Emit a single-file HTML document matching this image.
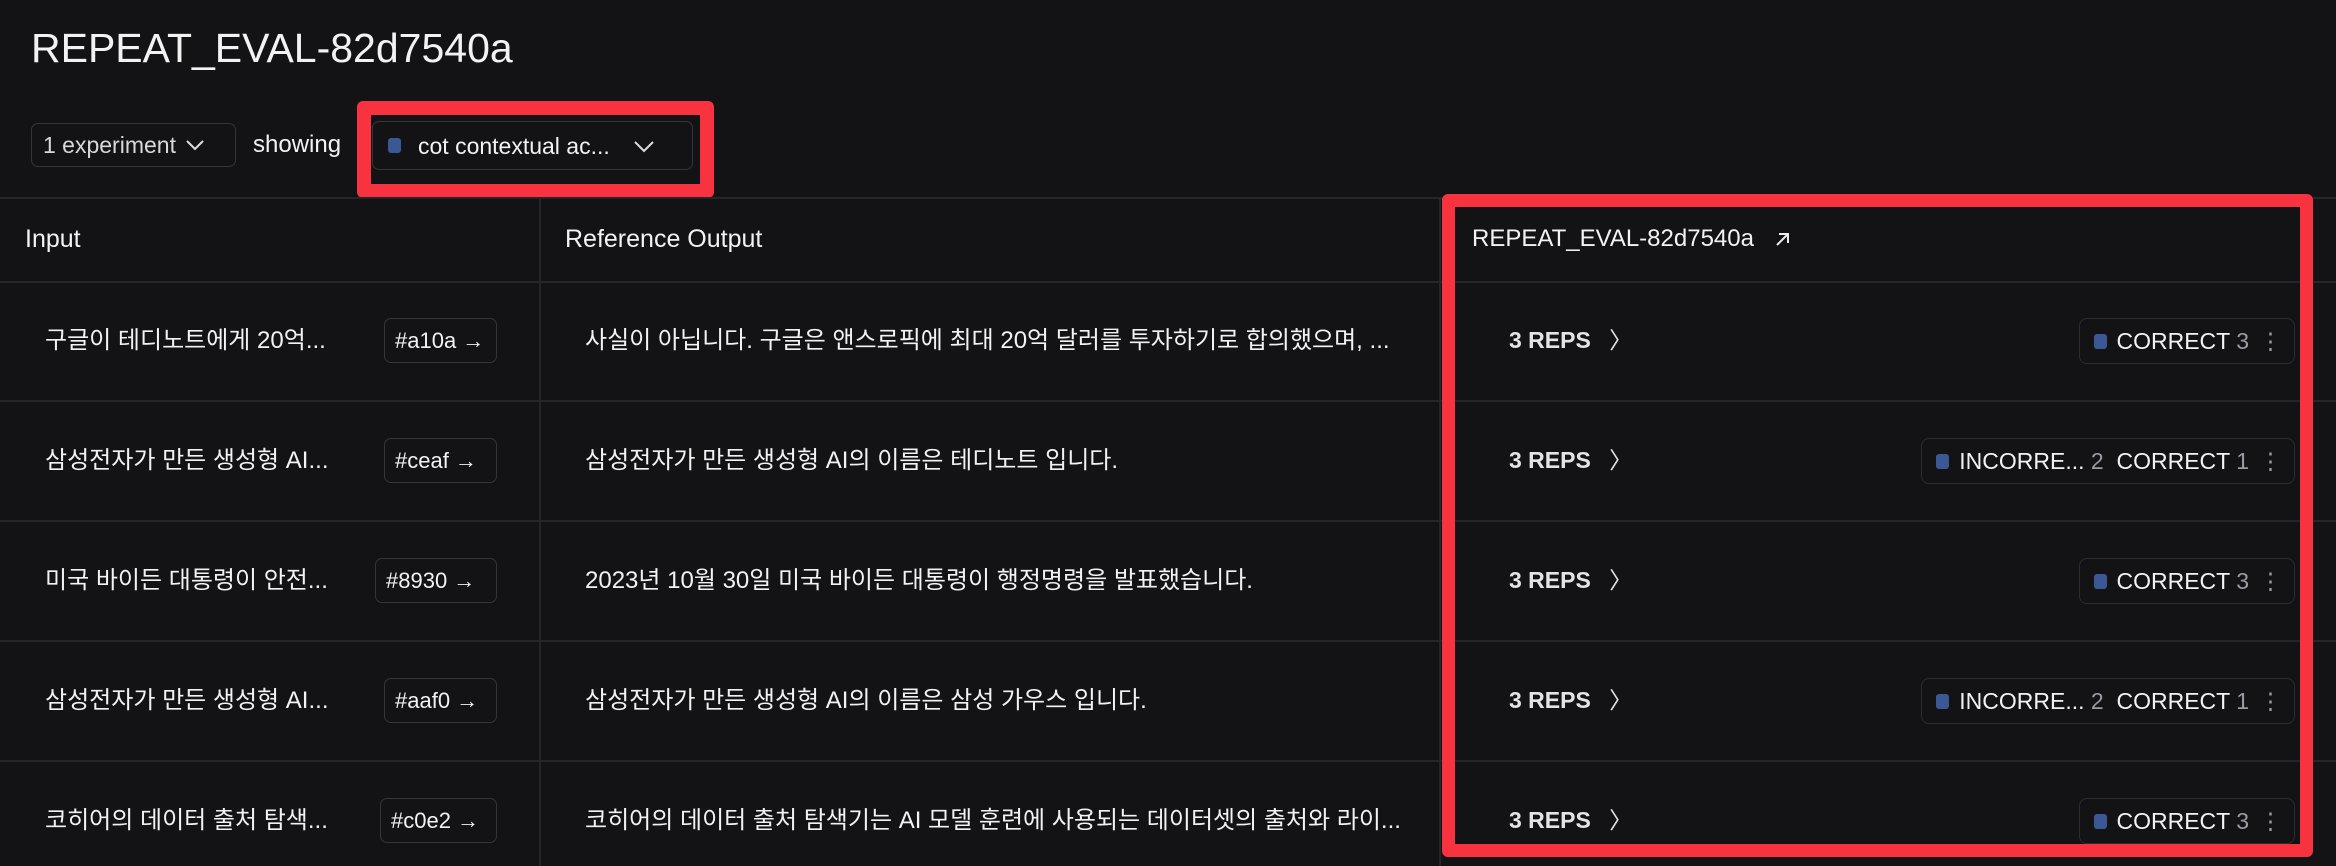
<!DOCTYPE html>
<html><head><meta charset="utf-8"><style>
*{box-sizing:border-box;margin:0;padding:0}
body{width:2336px;height:866px;background:#131315;color:#f2f2f3;font-family:"Liberation Sans","Noto Sans CJK KR",sans-serif;position:relative;overflow:hidden}
.abs{position:absolute}
.t{font-size:24px;line-height:28px;white-space:nowrap}
.hl{position:absolute;height:2px;background:#26262a;left:0;width:2336px}
.vl{position:absolute;width:2px;background:#26262a;top:197px;height:669px}
.box{position:absolute;border:1.5px solid #34343a;border-radius:7px;display:flex;align-items:center}
.red{position:absolute;border:13px solid #f8323f;border-radius:6px}
.sq{display:inline-block;width:13px;height:15px;background:#3b5894;border-radius:3px}
.reps{position:absolute;left:1509px;font-size:23px;line-height:28px;font-weight:bold;color:#e4e4e6}
.chip{position:absolute;right:41px;height:46px;border:1.5px solid #2c2c31;border-radius:8px;display:flex;align-items:center;padding:0 12px 0 14px;font-size:23px;gap:10px;white-space:nowrap}
.g{color:#9a9aa2}
.hash{font-size:22px}
</style></head><body>
<div class="abs" style="left:31px;top:25px;font-size:41px;">REPEAT_EVAL-82d7540a</div>
<div class="box t" style="left:31px;top:123px;width:205px;height:44px;padding-left:11px;color:#d8d8dc;font-size:23px">1 experiment <svg width="22" height="14" style="margin-left:8px"><path d="M3 3l8 8 8-8" stroke="#ddd" stroke-width="2" fill="none"/></svg></div>
<div class="abs t" style="left:253px;top:131px">showing</div>
<div class="box t" style="left:372px;top:121px;width:321px;height:49px;padding-left:15px;font-size:23px"><span class="sq"></span><span style="margin-left:17px">cot contextual ac...</span><svg width="24" height="14" style="margin-left:22px"><path d="M3 3l9 9 9-9" stroke="#ddd" stroke-width="2" fill="none"/></svg></div>
<div class="red" style="left:357px;top:101px;width:357px;height:97px;border-width:14px"></div>

<div class="hl" style="top:197px"></div>
<div class="hl" style="top:281px"></div>
<div class="hl" style="top:400px"></div>
<div class="hl" style="top:520px"></div>
<div class="hl" style="top:640px"></div>
<div class="hl" style="top:760px"></div>
<div class="vl" style="left:539px"></div>
<div class="vl" style="left:1439px"></div>

<div class="abs t" style="left:25px;top:225px;font-size:25px">Input</div>
<div class="abs t" style="left:565px;top:225px;font-size:25px">Reference Output</div>
<div class="abs t" style="left:1472px;top:225px;font-size:24px">REPEAT_EVAL-82d7540a <svg width="18" height="18" style="margin-left:12px;vertical-align:-2px"><path d="M4 15L15 4M6 4h9v9" stroke="#eee" stroke-width="2" fill="none"/></svg></div>

<div class="abs t" style="left:45px;top:327px">구글이 테디노트에게 20억...</div>
<div class="abs t" style="left:45px;top:447px">삼성전자가 만든 생성형 AI...</div>
<div class="abs t" style="left:45px;top:567px">미국 바이든 대통령이 안전...</div>
<div class="abs t" style="left:45px;top:687px">삼성전자가 만든 생성형 AI...</div>
<div class="abs t" style="left:45px;top:807px">코히어의 데이터 출처 탐색...</div>

<div class="box t hash" style="left:384px;top:318px;width:113px;height:45px;padding-left:10px">#a10a →</div>
<div class="box t hash" style="left:384px;top:438px;width:113px;height:45px;padding-left:10px">#ceaf →</div>
<div class="box t hash" style="left:375px;top:558px;width:122px;height:45px;padding-left:10px">#8930 →</div>
<div class="box t hash" style="left:384px;top:678px;width:113px;height:45px;padding-left:10px">#aaf0 →</div>
<div class="box t hash" style="left:380px;top:798px;width:117px;height:45px;padding-left:10px">#c0e2 →</div>

<div class="abs t" style="left:585px;top:327px">사실이 아닙니다. 구글은 앤스로픽에 최대 20억 달러를 투자하기로 합의했으며, ...</div>
<div class="abs t" style="left:585px;top:447px">삼성전자가 만든 생성형 AI의 이름은 테디노트 입니다.</div>
<div class="abs t" style="left:585px;top:567px">2023년 10월 30일 미국 바이든 대통령이 행정명령을 발표했습니다.</div>
<div class="abs t" style="left:585px;top:687px">삼성전자가 만든 생성형 AI의 이름은 삼성 가우스 입니다.</div>
<div class="abs t" style="left:585px;top:807px">코히어의 데이터 출처 탐색기는 AI 모델 훈련에 사용되는 데이터셋의 출처와 라이...</div>

<div class="reps" style="top:326px">3 REPS <span style="font-weight:normal;margin-left:12px">〉</span></div>
<div class="reps" style="top:446px">3 REPS <span style="font-weight:normal;margin-left:12px">〉</span></div>
<div class="reps" style="top:566px">3 REPS <span style="font-weight:normal;margin-left:12px">〉</span></div>
<div class="reps" style="top:686px">3 REPS <span style="font-weight:normal;margin-left:12px">〉</span></div>
<div class="reps" style="top:806px">3 REPS <span style="font-weight:normal;margin-left:12px">〉</span></div>

<div class="chip" style="top:318px"><span class="sq"></span><span>CORRECT <span class="g">3</span></span><span class="g">⋮</span></div>
<div class="chip" style="top:438px"><span class="sq"></span><span>INCORRE... <span class="g">2</span>&nbsp; CORRECT <span class="g">1</span></span><span class="g">⋮</span></div>
<div class="chip" style="top:558px"><span class="sq"></span><span>CORRECT <span class="g">3</span></span><span class="g">⋮</span></div>
<div class="chip" style="top:678px"><span class="sq"></span><span>INCORRE... <span class="g">2</span>&nbsp; CORRECT <span class="g">1</span></span><span class="g">⋮</span></div>
<div class="chip" style="top:798px"><span class="sq"></span><span>CORRECT <span class="g">3</span></span><span class="g">⋮</span></div>

<div class="red" style="left:1442px;top:194px;width:871px;height:663px"></div>
</body></html>
